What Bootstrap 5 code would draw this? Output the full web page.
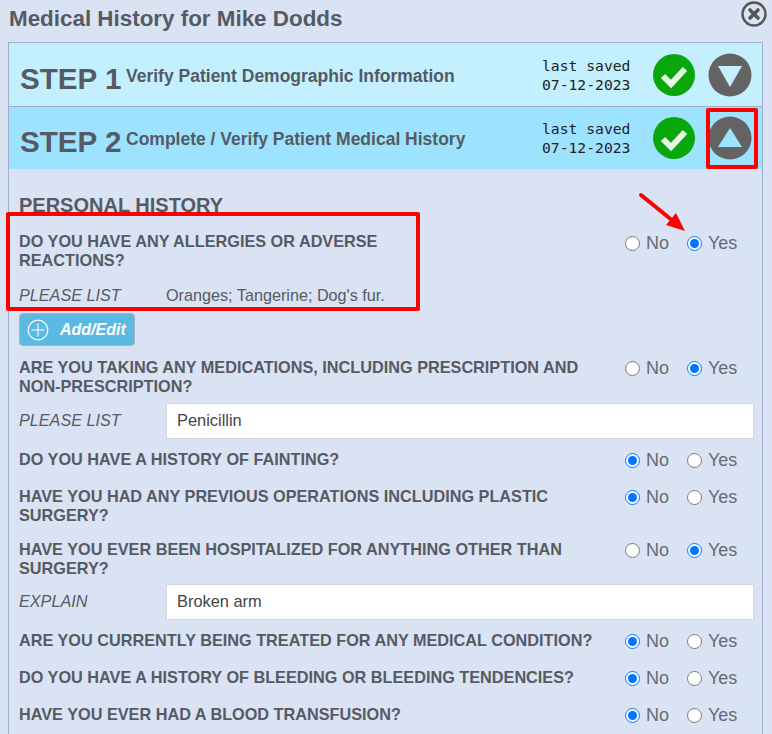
<!DOCTYPE html>
<html lang="en">
<head>
    <meta charset="UTF-8">
    <meta name="viewport" content="width=device-width, initial-scale=1.0">
    <title>Medical History</title>
    <link href="https://cdn.jsdelivr.net/npm/bootstrap@5.3.0/dist/css/bootstrap.min.css" rel="stylesheet">
    <style>
        html, body { height: 734px; overflow: hidden; }
        body {
            background: #dae3f3;
            color: #555a63;
            font-family: "Liberation Sans", Arial, sans-serif;
            font-size: 16.2px;
            position: relative;
        }
        .dlg-title { font-size: 22.4px; font-weight: 700; height: 42px; padding: 6px 0 0 9px; line-height: 26px; margin: 0; }
        .close-ico { position: absolute; left: 741px; top: 1px; }
        .dlg-box { margin: 0 9px 0 8px; border: 1px solid #9fb0cf; border-bottom: 0; height: 692px; }
        .step-bar { height: 64px; padding: 0 10px 0 11px; border-bottom: 1px solid #9fb0cf; }
        .step-one { background: #c3efff; }
        .step-two { background: #9de3ff; height: 62px; border-bottom: 0; }
        .step-num { font-size: 29.6px; font-weight: 700; width: 106px; white-space: nowrap; padding-top: 9px; }
        .step-text { font-size: 17.5px; font-weight: 700; flex: 1; padding-top: 3px; }
        .saved-at { font-family: "DejaVu Sans Mono", monospace; font-size: 14.7px; line-height: 19px; color: #222; width: 110px; }
        .step-ico { width: 44px; height: 44px; display: block; }
        .arrow-ico { margin-left: 12px; }
        .form-area { padding: 24px 8px 0 10px; }
        .section-head { font-size: 20px; font-weight: 700; line-height: 24px; margin: 0 0 15px; }
        .q-row { min-height: 22px; margin-bottom: 15px; }
        .q-text { width: 590px; margin: 0 16px -1px 0; padding-top: 1px; font-size: 16.26px; font-weight: 700; line-height: 19px; }
        .q-short { width: 400px; margin: -1px 206px 0 0; }
        .yes-no { font-size: 18px; line-height: 22px; color: #666b73; align-items: flex-start; }
        .yes-no label { display: flex; align-items: center; gap: 6px; width: 62px; }
        .yes-no input { width: 15px; height: 15px; margin: 0; accent-color: #0075ff; }
        .list-row { margin-top: -7px; margin-bottom: 10px; }
        .list-row-tight { margin-top: -8px; }
        .list-label { width: 147px; font-style: italic; flex: none; }
        .list-row .list-label { padding-bottom: 2px; }
        .list-row .form-control { height: 36px; border-radius: 0; padding: 0 10px 2px; color: #444; font-size: 16.4px; font-family: inherit; border-color: #d4d8de; }
        .list-plain { margin-bottom: 8px; line-height: 20px; }
        .add-btn {
            display: inline-flex; align-items: center; gap: 11px;
            height: 33px; width: 116px; padding: 0 0 0 7px;
            background: #5bb9e2; border: 1px solid #a3b5c8; border-radius: 4px;
            color: #fff; font-weight: 700; font-style: italic; font-size: 16px;
            margin-bottom: 11px;
        }
        .callout { position: absolute; border: 4px solid #f00; border-radius: 2px; pointer-events: none; }
        .callout-q { left: 6px; top: 212px; width: 414px; height: 99px; }
        .callout-btn { left: 706px; top: 108px; width: 52px; height: 61px; }
        .pointer { position: absolute; left: 636px; top: 190px; }
    </style>
</head>
<body>
    <h1 class="dlg-title">Medical History for Mike Dodds</h1>
    <svg class="close-ico" width="26" height="26" viewBox="0 0 26 26">
        <circle cx="13" cy="13" r="11.5" fill="none" stroke="#555" stroke-width="2.4"/>
        <path d="M9 9l8 8M17 9l-8 8" stroke="#555" stroke-width="3.6" stroke-linecap="round"/>
    </svg>

    <div class="dlg-box">
        <div class="step-bar step-one d-flex align-items-center">
            <div class="step-num">STEP 1</div>
            <div class="step-text">Verify Patient Demographic Information</div>
            <div class="saved-at">last saved<br>07-12-2023</div>
            <svg class="step-ico" viewBox="0 0 44 44"><circle cx="22" cy="22" r="21" fill="#0aa70a"/><path d="M11 23l8 8 14-15" fill="none" stroke="#e8f8e8" stroke-width="6"/></svg>
            <svg class="step-ico arrow-ico" viewBox="0 0 44 44"><circle cx="22" cy="22" r="21.5" fill="#636363"/><path d="M10 13h24L22 34z" fill="#c3efff"/></svg>
        </div>
        <div class="step-bar step-two d-flex align-items-center">
            <div class="step-num">STEP 2</div>
            <div class="step-text">Complete / Verify Patient Medical History</div>
            <div class="saved-at">last saved<br>07-12-2023</div>
            <svg class="step-ico" viewBox="0 0 44 44"><circle cx="22" cy="22" r="21" fill="#0aa70a"/><path d="M11 23l8 8 14-15" fill="none" stroke="#e8f8e8" stroke-width="6"/></svg>
            <svg class="step-ico arrow-ico" viewBox="0 0 44 44"><circle cx="22" cy="22" r="21.5" fill="#636363"/><path d="M10 31h24L22 12z" fill="#9de3ff"/></svg>
        </div>

        <div class="form-area">
            <h2 class="section-head">PERSONAL HISTORY</h2>

            <div class="q-row d-flex">
                <div class="q-text q-short">DO YOU HAVE ANY ALLERGIES OR ADVERSE REACTIONS?</div>
                <div class="yes-no d-flex">
                    <label><input type="radio" name="q1">No</label>
                    <label><input type="radio" name="q1" checked>Yes</label>
                </div>
            </div>
            <div class="list-plain d-flex">
                <div class="list-label">PLEASE LIST</div>
                <div>Oranges; Tangerine; Dog's fur.</div>
            </div>
            <button type="button" class="btn add-btn">
                <svg width="22" height="22" viewBox="0 0 22 22"><circle cx="11" cy="11" r="9.8" fill="none" stroke="#fff" stroke-width="1.2"/><path d="M11 4.5v13M4.5 11h13" stroke="#fff" stroke-width="1.2"/></svg>
                Add/Edit
            </button>

            <div class="q-row d-flex">
                <div class="q-text">ARE YOU TAKING ANY MEDICATIONS, INCLUDING PRESCRIPTION AND NON-PRESCRIPTION?</div>
                <div class="yes-no d-flex">
                    <label><input type="radio" name="q2">No</label>
                    <label><input type="radio" name="q2" checked>Yes</label>
                </div>
            </div>
            <div class="list-row d-flex align-items-center">
                <div class="list-label">PLEASE LIST</div>
                <input type="text" class="form-control" value="Penicillin">
            </div>

            <div class="q-row d-flex">
                <div class="q-text">DO YOU HAVE A HISTORY OF FAINTING?</div>
                <div class="yes-no d-flex">
                    <label><input type="radio" name="q3" checked>No</label>
                    <label><input type="radio" name="q3">Yes</label>
                </div>
            </div>
            <div class="q-row d-flex">
                <div class="q-text">HAVE YOU HAD ANY PREVIOUS OPERATIONS INCLUDING PLASTIC SURGERY?</div>
                <div class="yes-no d-flex">
                    <label><input type="radio" name="q4" checked>No</label>
                    <label><input type="radio" name="q4">Yes</label>
                </div>
            </div>
            <div class="q-row d-flex">
                <div class="q-text">HAVE YOU EVER BEEN HOSPITALIZED FOR ANYTHING OTHER THAN SURGERY?</div>
                <div class="yes-no d-flex">
                    <label><input type="radio" name="q5">No</label>
                    <label><input type="radio" name="q5" checked>Yes</label>
                </div>
            </div>
            <div class="list-row list-row-tight d-flex align-items-center">
                <div class="list-label">EXPLAIN</div>
                <input type="text" class="form-control" value="Broken arm">
            </div>

            <div class="q-row d-flex">
                <div class="q-text">ARE YOU CURRENTLY BEING TREATED FOR ANY MEDICAL CONDITION?</div>
                <div class="yes-no d-flex">
                    <label><input type="radio" name="q6" checked>No</label>
                    <label><input type="radio" name="q6">Yes</label>
                </div>
            </div>
            <div class="q-row d-flex">
                <div class="q-text">DO YOU HAVE A HISTORY OF BLEEDING OR BLEEDING TENDENCIES?</div>
                <div class="yes-no d-flex">
                    <label><input type="radio" name="q7" checked>No</label>
                    <label><input type="radio" name="q7">Yes</label>
                </div>
            </div>
            <div class="q-row d-flex">
                <div class="q-text">HAVE YOU EVER HAD A BLOOD TRANSFUSION?</div>
                <div class="yes-no d-flex">
                    <label><input type="radio" name="q8" checked>No</label>
                    <label><input type="radio" name="q8">Yes</label>
                </div>
            </div>
        </div>
    </div>

    <!-- red markup drawn over the form -->
    <div class="callout callout-btn"></div>
    <div class="callout callout-q"></div>
    <svg class="pointer" width="54" height="48" viewBox="0 0 54 48">
        <path d="M5 5L37 31" stroke="#f00" stroke-width="4" stroke-linecap="round"/>
        <path d="M49 41L30 35L40 23z" fill="#f00"/>
    </svg>

    <script src="https://cdn.jsdelivr.net/npm/bootstrap@5.3.0/dist/js/bootstrap.bundle.min.js"></script>
</body>
</html>
